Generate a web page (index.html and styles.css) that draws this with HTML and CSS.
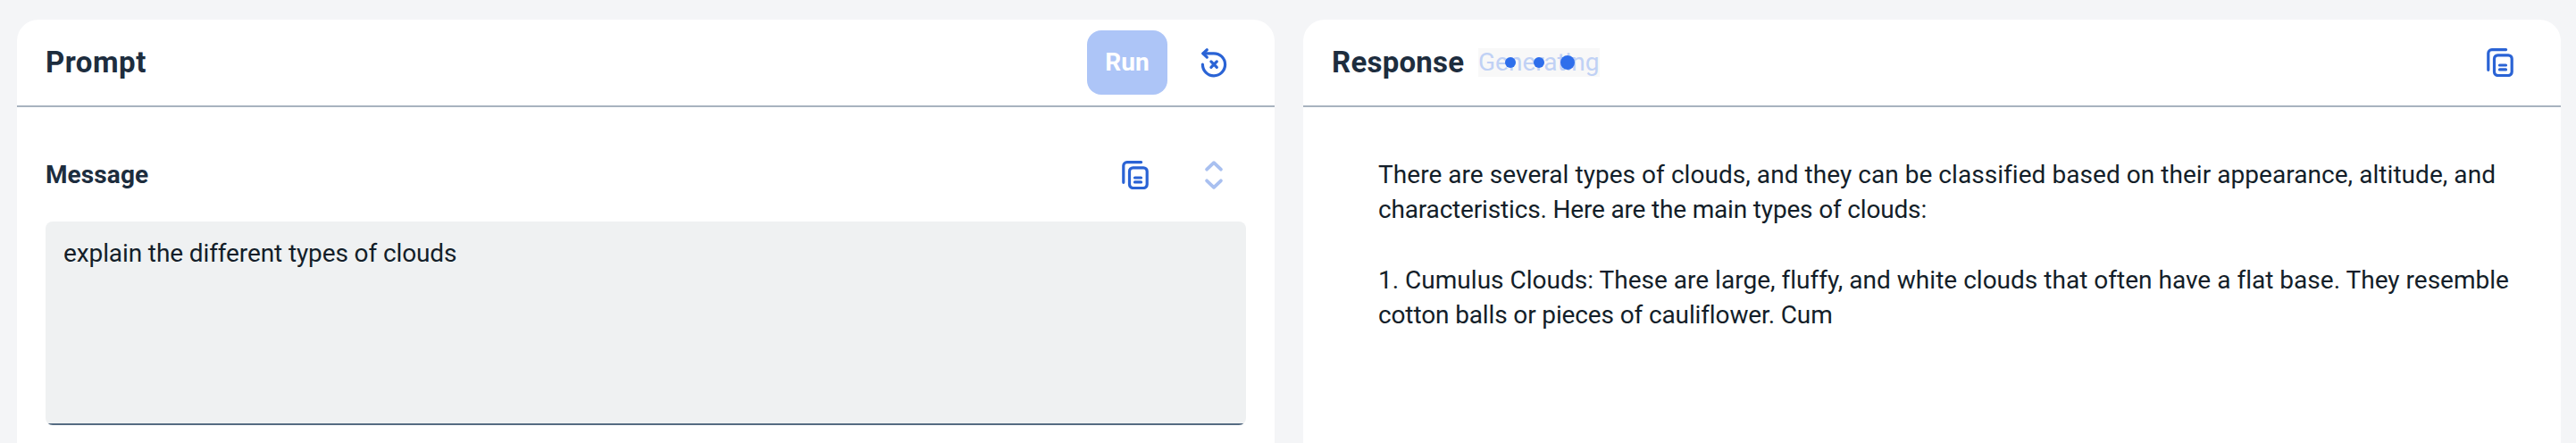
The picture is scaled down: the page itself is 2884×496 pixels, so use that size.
FILE: index.html
```
<!DOCTYPE html>
<html lang="en">
<head>
<meta charset="utf-8">
<title>Prompt</title>
<link rel="stylesheet" href="styles.css">
</head>
<body>
<svg class="symbols" aria-hidden="true">
  <symbol id="copy" viewBox="0 0 32 32">
    <path d="M2.8 24.3V5.6a4 4 0 0 1 4-4h15.8"/>
    <rect x="9.5" y="7.8" width="19.7" height="22.7" rx="4"/>
    <path d="M15.5 19h7M15.5 23.9h7"/>
  </symbol>
</svg>
<main class="panels">
  <section class="panel">
    <header class="panel-header">
      <h1 class="title title-prompt">Prompt</h1>
      <div class="actions">
        <button class="run">Run</button>
        <button class="icon-button" aria-label="Restore">
          <svg class="icon" viewBox="0 0 32 32">
            <path d="M3.4 18.2a12.6 12.5 0 1 0 12.6-12.4H4"/>
            <path d="M8.3 1.8L3.8 5.9l4.5 4.2"/>
            <path d="M12.9 14.9l6.4 6.4M19.3 14.9l-6.4 6.4"/>
          </svg>
        </button>
      </div>
    </header>
    <div class="prompt-body">
      <div class="message-row">
        <h2 class="label">Message</h2>
        <div class="actions">
          <button class="icon-button" aria-label="Copy"><svg class="icon"><use href="#copy"/></svg></button>
          <button class="icon-button disabled" aria-label="Expand">
            <svg class="icon" viewBox="0 0 32 32"><path d="M8.1 9.7L16 2.2l7.9 7.5M8.1 22.3l7.9 7.5 7.9-7.5"/></svg>
          </button>
        </div>
      </div>
      <div class="message-input"><span class="message-text">explain the different types of clouds</span></div>
    </div>
  </section>
  <section class="panel">
    <header class="panel-header">
      <div class="response-heading">
        <h1 class="title title-response">Response</h1>
        <div class="status">
          <span class="status-text">Generating</span>
          <div class="busy"><i class="dot"></i><i class="dot"></i><i class="dot dot-large"></i></div>
        </div>
      </div>
      <button class="icon-button" aria-label="Copy"><svg class="icon"><use href="#copy"/></svg></button>
    </header>
    <div class="response-body">
      <p class="line line-a">There are several types of clouds, and they can be classified based on their appearance, altitude, and</p>
      <p class="line line-b">characteristics. Here are the main types of clouds:</p>
      <p class="line line-c paragraph">1. Cumulus Clouds: These are large, fluffy, and white clouds that often have a flat base. They resemble</p>
      <p class="line line-d">cotton balls or pieces of cauliflower. Cum</p>
    </div>
  </section>
</main>
</body>
</html>
```
FILE: styles.css
```
* { box-sizing: border-box; }

body {
  margin: 0;
  background: #f4f5f7;
  color: #131e29;
  font: 28px/39.2px Roboto, "Liberation Sans", sans-serif;
}

h1, h2, p { margin: 0; }

button {
  border: 0;
  padding: 0;
  background: none;
  font: inherit;
}

.symbols { display: none; }

.panels {
  display: grid;
  grid-template-columns: 1408px 1408px;
  gap: 32px;
  height: 496px;
  padding: 22px 0 0 19px;
  overflow: hidden;
}

.panel {
  background: #fff;
  border-radius: 24px 24px 0 0;
}

.panel-header {
  display: flex;
  align-items: center;
  justify-content: space-between;
  height: 98px;
  padding: 0 32px;
  border-bottom: 2px solid #a8b3bf;
}

.title {
  color: #1d2d3e;
  font-size: 33px;
  font-weight: 700;
  white-space: nowrap;
}
.title-prompt { letter-spacing: 0.5px; }
.title-response {
  width: 147px;
  margin-right: 17px;
  letter-spacing: 0.25px;
}

.actions {
  display: flex;
  align-items: center;
  gap: 16px;
}

.run {
  width: 90px;
  height: 72px;
  border-radius: 16px;
  background: #adc5f7;
  color: #fff;
  font-weight: 700;
}

.icon-button {
  display: grid;
  place-items: center;
  width: 72px;
  height: 72px;
  color: #2a63d5;
}

.icon {
  width: 32px;
  height: 32px;
  overflow: visible;
  fill: none;
  stroke: currentColor;
  stroke-width: 3.2;
  stroke-linecap: round;
  stroke-linejoin: round;
}

.disabled { color: #a9c0f0; }
.disabled .icon { stroke-width: 3.8; }

.prompt-body { padding: 40px 32px 0; }

.message-row {
  display: flex;
  align-items: center;
  justify-content: space-between;
  height: 72px;
  margin-bottom: 16px;
}

.label {
  color: #1d2d3e;
  font-size: 28px;
  font-weight: 700;
  letter-spacing: 0.1px;
}

.message-input {
  height: 228px;
  padding: 16px 20px;
  border-radius: 8px;
  background: linear-gradient(#556b82, #556b82) bottom / 100% 2px no-repeat #eff1f2;
}
.message-text { letter-spacing: -0.11px; }

.response-heading {
  display: flex;
  align-items: center;
}

.status {
  position: relative;
  width: 136px;
  height: 32px;
  background: #f8f8f8;
  color: #c0d1f5;
  line-height: 32px;
}

.busy {
  position: absolute;
  inset: 0;
  display: grid;
  grid-template-columns: repeat(3, 32px);
  justify-content: center;
  place-items: center;
}
.dot {
  width: 12.6px;
  height: 12.6px;
  border-radius: 50%;
  background: #2e6eeb;
}
.dot-large { width: 16px; height: 16px; }

.response-body { padding: 56px 48px 0 84px; }
.line { white-space: nowrap; }
.paragraph { margin-top: 39.2px; }
.line-a { letter-spacing: 0.05px; }
.line-b { letter-spacing: -0.17px; }
.line-c { letter-spacing: 0.015px; }
.line-d { letter-spacing: -0.13px; }
```
